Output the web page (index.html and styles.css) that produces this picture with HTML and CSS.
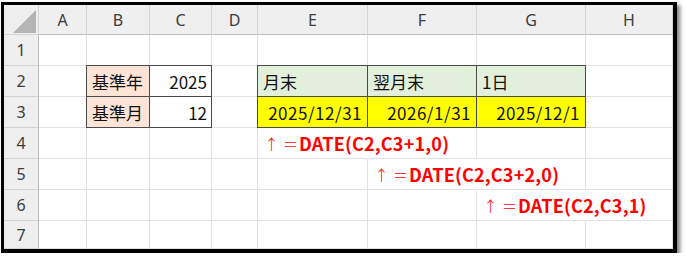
FILE: index.html
```html
<!DOCTYPE html>
<html lang="ja">
<head>
<meta charset="utf-8">
<link rel="stylesheet" href="styles.css">
</head>
<body>
<div class="frame">
  <div class="sheet">
    <div class="corner"><span class="tri"></span></div>
    <div class="ch">A</div><div class="ch">B</div><div class="ch">C</div><div class="ch">D</div>
    <div class="ch">E</div><div class="ch">F</div><div class="ch">G</div><div class="ch">H</div>

    <div class="rh">1</div>
    <div class="c"></div><div class="c"></div><div class="c"></div><div class="c"></div>
    <div class="c"></div><div class="c"></div><div class="c"></div><div class="c"></div>

    <div class="rh">2</div>
    <div class="c"></div>
    <div class="c box peach first top">基準年</div>
    <div class="c box num top">2025</div>
    <div class="c"></div>
    <div class="c box green first top">月末</div>
    <div class="c box green top">翌月末</div>
    <div class="c box green top">1日</div>
    <div class="c"></div>

    <div class="rh">3</div>
    <div class="c"></div>
    <div class="c box peach first">基準月</div>
    <div class="c box num">12</div>
    <div class="c"></div>
    <div class="c box yellow num date first">2025/12/31</div>
    <div class="c box yellow num date">2026/1/31</div>
    <div class="c box yellow num date">2025/12/1</div>
    <div class="c"></div>

    <div class="rh">4</div>
    <div class="c"></div><div class="c"></div><div class="c"></div><div class="c"></div>
    <div class="c note"><span class="arrow">↑</span><span class="eq">＝</span><b>DATE(C2,C3+1,0)</b></div>
    <div class="c"></div><div class="c"></div><div class="c"></div>

    <div class="rh">5</div>
    <div class="c"></div><div class="c"></div><div class="c"></div><div class="c"></div><div class="c"></div>
    <div class="c note"><span class="arrow">↑</span><span class="eq">＝</span><b>DATE(C2,C3+2,0)</b></div>
    <div class="c"></div><div class="c"></div>

    <div class="rh">6</div>
    <div class="c"></div><div class="c"></div><div class="c"></div><div class="c"></div><div class="c"></div><div class="c"></div>
    <div class="c note"><span class="arrow">↑</span><span class="eq">＝</span><b>DATE(C2,C3,1)</b></div>
    <div class="c"></div>

    <div class="rh">7</div>
    <div class="c"></div><div class="c"></div><div class="c"></div><div class="c"></div>
    <div class="c"></div><div class="c"></div><div class="c"></div><div class="c"></div>
  </div>
</div>
</body>
</html>
```

FILE: styles.css
```css
html, body {
  margin: 0;
  padding: 0;
  background: #ffffff;
}

.frame {
  margin: 2px 0 0 1px;
  width: 669px;
  height: 244px;
  border-style: solid;
  border-color: #000000;
  border-width: 3px 4px 4px 3px;
  box-shadow: 3px 3px 4px rgba(0, 0, 0, 0.5);
  overflow: hidden;
}

.sheet {
  display: grid;
  grid-template-columns: 35px 48px 63px 62px 46px 110px 109px 109px 87px;
  grid-template-rows: 30px repeat(6, 31px) 28px;
  background: #ffffff;
}

.sheet > div {
  box-sizing: border-box;
  border-right: 1px solid #e1e1e1;
  border-bottom: 1px solid #e1e1e1;
  display: flex;
  align-items: center;
  white-space: nowrap;
}

.corner {
  background: #efefef;
  justify-content: flex-end;
  align-items: flex-end !important;
  padding: 0 2px 1px 0;
  border-color: #d4d4d4 !important;
}

.tri {
  width: 0;
  height: 0;
  border-left: 23px solid transparent;
  border-bottom: 23px solid #b5b5b5;
}

.ch,
.rh {
  background: #efefef;
  border-color: #d4d4d4 !important;
  color: #3c3c3c;
  font-family: "Noto Sans", "DejaVu Sans", sans-serif;
  font-size: 16px;
  justify-content: center;
}

.ch {
  border-bottom-color: #bcbcbc !important;
}

.rh {
  border-right-color: #bcbcbc !important;
}

.c {
  font-family: "Noto Sans CJK JP", sans-serif;
  font-size: 17px;
  color: #111111;
  padding: 0 4px 0 5px;
}

.num {
  justify-content: flex-end;
}

.date {
  letter-spacing: 0.5px;
  padding-right: 5px;
}

.box {
  border-right-color: #4a4a4a !important;
  border-bottom-color: #4a4a4a !important;
}

.box.first {
  box-shadow: -1px 0 0 #4a4a4a;
}

.box.top {
  box-shadow: 0 -1px 0 #4a4a4a;
}

.box.first.top {
  box-shadow: -1px 0 0 #4a4a4a, 0 -1px 0 #4a4a4a, -1px -1px 0 #4a4a4a;
}

.peach {
  background: #fce4d6;
}

.green {
  background: #e2efda;
}

.yellow {
  background: #ffff00;
}

.note {
  overflow: visible;
  color: #ff0000;
  font-size: 18px;
  padding-left: 6px;
  border-right-color: transparent !important;
}

.note b {
  font-weight: 700;
  letter-spacing: 0.2px;
}

.arrow {
  font-weight: 300;
  font-size: 15px;
  margin-right: 4px;
}

.eq {
  font-weight: 300;
  font-size: 15px;
  margin-right: 1px;
}
```
